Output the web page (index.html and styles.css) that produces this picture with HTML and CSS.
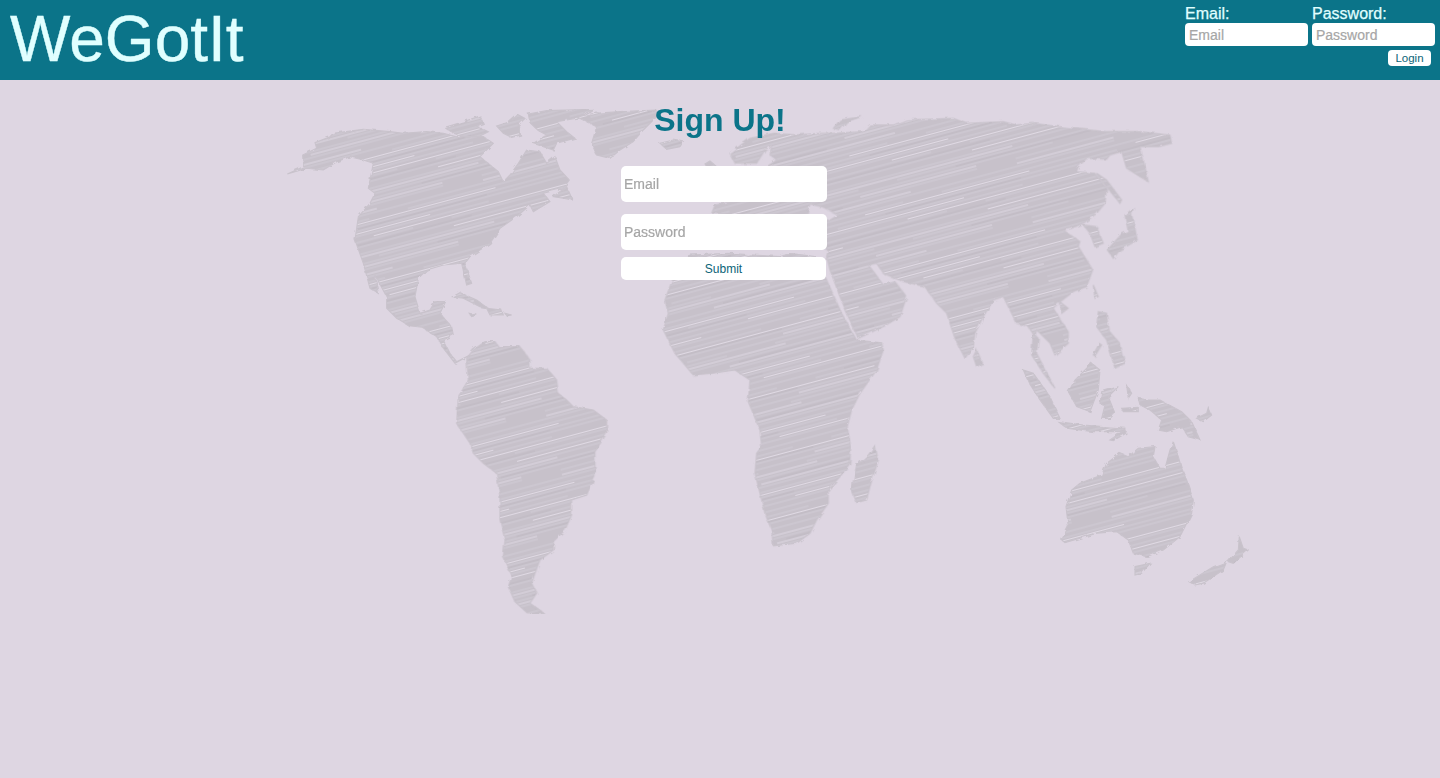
FILE: index.html
```html
<!DOCTYPE html>
<html lang="en">
<head>
    <meta charset="UTF-8">
    <title>WeGotIt</title>
    <link rel="stylesheet" href="styles.css">
</head>
<body>
<!-- scribbled world map, drawn behind the page -->
<svg class="map" width="1440" height="778" viewBox="0 0 1440 778" aria-hidden="true">
    <defs>
        <!-- americas north + arctic + greenland + caribbean -->
        <path id="land-nw" transform="translate(280 100) scale(.3333)" d="M22,222 L70,200 L68,165 L110,145 L105,128 L150,110 L160,100 L250,88 L330,95 L370,100 L440,95 L490,100 L530,110 L610,110 L640,130 L600,170 L655,215 L670,245 L690,225 L715,190 L740,150 L780,155 L800,190 L825,170 L840,210 L868,240 L850,265 L790,280 L810,305 L760,335 L750,315 L710,350 L660,385 L630,430 L570,470 L555,490 L575,550 L560,555 L545,490 L490,495 L440,510 L415,535 L405,590 L420,640 L450,630 L465,605 L497,605 L480,640 L515,680 L520,705 L490,720 L510,760 L530,785 L570,765 L525,790 L490,745 L470,710 L430,685 L390,680 L350,655 L320,625 L320,590 L285,525 L295,580 L270,565 L250,490 L225,420 L235,350 L270,310 L285,280 L265,265 L280,190 L250,180 L210,170 L170,185 L130,210 L80,205 Z
        M495,82 L550,65 L600,48 L610,70 L590,78 L625,95 L600,108 L560,112 L520,100 Z
        M650,78 L680,68 L710,42 L735,55 L715,75 L722,105 L695,112 L670,100 Z
        M745,42 L800,32 L940,28 L890,55 L830,65 L860,95 L885,115 L830,130 L820,150 L760,130 L800,105 L775,92 L750,68 Z
        M820,290 L860,260 L878,300 L850,295 Z
        M518,590 L540,578 L590,600 L625,625 L600,620 L550,595 Z
        M620,625 L665,630 L670,645 L630,645 Z
        M568,640 L592,645 L575,650 Z
        M675,640 L695,645 L680,648 Z
        M890,50 L945,40 L1020,35 L1130,30 L1135,45 L1090,90 L1060,125 L1020,150 L990,175 L950,165 L935,130 L950,80 Z
        M1140,130 L1180,120 L1210,125 L1200,140 L1160,148 Z
        M1275,192 L1290,183 L1305,195 L1290,215 Z"/>
        <!-- europe + asia + islands -->
        <path id="land-asia" transform="translate(820 100) scale(.3333)" d="M-70,105 L-140,100 L-210,115 L-270,160 L-255,190 L-190,190 L-165,150 L-145,135 L-150,165 L-130,180 L-160,200 L-200,260 L-240,300 L-315,315 L-325,340 L-240,345 L-100,400 L25,450 L20,470 L30,510 L60,590 L85,650 L115,715 L190,680 L240,650 L260,590 L225,545 L190,555 L165,520 L145,495 L170,490 L190,520 L225,535 L250,545 L315,560 L350,610 L380,640 L405,715 L435,775 L460,740 L465,700 L490,650 L520,600 L550,590 L590,670 L625,680 L645,710 L650,690 L690,730 L705,765 L745,730 L745,695 L700,625 L715,610 L760,575 L800,560 L818,510 L800,480 L775,440 L780,425 L730,390 L755,385 L790,370 L830,340 L855,310 L860,265 L825,220 L770,215 L775,200 L800,175 L860,178 L870,165 L905,155 L920,205 L960,230 L985,245 L975,200 L960,140 L1015,140 L1055,130 L1050,105 L960,95 L860,95 L760,85 L640,70 L590,75 L550,65 L440,70 L400,55 L260,60 L220,75 L150,75 L130,95 L40,100 L0,100 Z
        M-40,345 L-30,312 L10,322 L55,345 L30,360 Z
        M40,85 L60,60 L125,50 L80,65 L60,90 Z
        M470,750 L488,790 L470,800 L460,770 Z
        M862,450 L905,402 L945,385 L952,420 L900,450 L880,475 Z
        M915,345 L940,325 L935,345 L945,385 L925,395 Z
        M830,220 L860,240 L905,300 L900,310 L855,255 Z
        M790,375 L830,380 L850,430 L825,440 L810,400 Z
        M720,605 L745,625 L725,640 Z
        M820,555 L835,590 L825,595 Z
        M835,635 L860,640 L865,690 L900,730 L915,790 L885,805 L860,720 L830,680 Z
        M838,730 L845,735 L825,768 L820,765 Z
        M640,700 L655,715 L650,760 L705,865 L670,820 L635,765 Z"/>
        <!-- south america + africa + madagascar -->
        <path id="land-south" transform="translate(440 330) scale(.3333)" d="M80,85 L100,60 L135,35 L165,35 L175,50 L240,50 L270,90 L270,115 L320,115 L350,150 L355,190 L375,205 L400,230 L460,240 L500,270 L500,310 L465,365 L465,440 L440,495 L395,510 L395,555 L375,600 L340,635 L340,660 L300,690 L285,730 L275,760 L290,790 L270,820 L315,852 L265,852 L225,815 L205,770 L215,740 L190,680 L195,630 L180,570 L180,500 L170,430 L130,400 L100,370 L90,340 L50,280 L55,200 L85,150 Z
        M750,-225 L870,-230 L940,-225 L1020,-220 L1050,-230 L1130,-220 L1160,-150 L1205,-50 L1250,30 L1325,38 L1330,60 L1310,120 L1260,190 L1235,240 L1222,290 L1232,350 L1230,400 L1200,440 L1165,480 L1165,520 L1130,570 L1110,610 L1070,640 L1000,648 L995,600 L975,550 L945,430 L950,370 L965,350 L960,300 L925,215 L930,150 L885,120 L820,130 L760,135 L705,70 L670,0 L685,-50 L675,-90 L695,-145 Z
        M1305,347 L1315,390 L1290,470 L1280,510 L1250,518 L1235,480 L1250,405 L1285,375 Z"/>
        <!-- indonesia + australia + nz -->
        <path id="land-oceania" transform="translate(1000 350) scale(.3333)" d="M70,60 L100,70 L150,140 L180,205 L160,205 L120,150 L85,95 Z
        M275,40 L300,60 L295,120 L270,185 L230,170 L205,125 L225,90 Z
        M175,215 L250,225 L375,235 L370,245 L280,245 L200,235 Z
        M330,270 L375,240 L378,250 L340,272 Z
        M305,125 L355,110 L325,140 L345,190 L330,205 L305,205 L315,165 L300,160 Z
        M415,145 L445,150 L480,150 L545,185 L575,215 L600,270 L565,260 L545,230 L500,245 L475,240 L485,210 L450,180 L420,165 Z
        M590,205 L620,190 L625,172 L635,195 L610,215 Z
        M380,105 L395,130 L385,145 Z
        M365,175 L415,172 L415,185 L370,185 Z
        M185,570 L205,530 L198,470 L215,420 L240,400 L305,375 L320,340 L360,310 L385,320 L415,295 L465,290 L460,320 L480,355 L495,355 L510,300 L520,275 L535,320 L545,355 L560,390 L580,450 L575,490 L540,560 L490,600 L440,620 L400,610 L385,570 L350,545 L290,550 L240,565 L195,578 Z
        M405,650 L450,640 L425,670 L405,675 Z
        M567,695 L640,650 L680,635 L670,660 L610,700 L585,705 Z
        M685,635 L715,600 L718,560 L730,595 L745,600 L700,640 Z"/>
        <filter id="rough" x="0" y="0" width="100%" height="100%">
            <feTurbulence type="fractalNoise" baseFrequency=".16" numOctaves="2" seed="4"/>
            <feDisplacementMap in="SourceGraphic" scale="4"/>
            <feGaussianBlur stdDeviation=".3"/>
        </filter>
        <filter id="soft" x="0" y="0" width="100%" height="100%">
            <feGaussianBlur stdDeviation=".35"/>
        </filter>
        <mask id="land-mask" maskUnits="userSpaceOnUse" x="0" y="0" width="1440" height="778">
            <g class="land-shape" filter="url(#rough)">
                <use href="#land-nw"/>
                <use href="#land-asia"/>
                <use href="#land-south"/>
                <use href="#land-oceania"/>
            </g>
        </mask>
        <pattern id="scribble" patternUnits="userSpaceOnUse" width="520" height="61" patternTransform="rotate(-15)">
            <rect width="520" height="61" fill="#c7c1ca"/>
            <path class="scr-mid" d="M0,2 H300 M340,2 H520 M60,7 H520 M0,11 H180 M230,11 H520 M0,16 H420 M20,22 H340 M380,22 H520 M0,27 H130 M170,27 H520 M0,34 H520 M50,40 H260 M300,40 H520 M0,44 H90 M140,44 H460 M0,50 H380 M420,50 H520 M30,58 H520"/>
            <path class="scr-light" d="M20,4.5 H170 M260,4.5 H430 M120,13.5 H360 M0,19.5 H70 M300,19.5 H520 M40,30.5 H230 M380,30.5 H500 M150,37 H420 M0,47 H150 M260,47 H380 M90,55 H310 M420,55 H520"/>
            <path class="scr-dark" d="M0,9 H120 M280,9 H420 M200,25 H400 M30,32 H150 M360,42 H500 M100,53 H240"/>
        </pattern>
    </defs>
    <g filter="url(#soft)">
        <rect width="1440" height="778" fill="url(#scribble)" mask="url(#land-mask)"/>
    </g>
    <g class="coast" filter="url(#rough)">
        <use href="#land-nw"/>
        <use href="#land-asia"/>
        <use href="#land-south"/>
        <use href="#land-oceania"/>
    </g>
</svg>

<header class="top">
    <div class="logo">WeGotIt</div>
    <form class="login">
        <label class="login-field">Email:
            <input type="text" placeholder="Email">
        </label>
        <label class="login-field">Password:
            <input type="password" placeholder="Password">
        </label>
        <button class="login-btn" type="button">Login</button>
    </form>
</header>

<main class="signup">
    <h1>Sign Up!</h1>
    <form class="signup-form">
        <input type="text" placeholder="Email">
        <input type="password" placeholder="Password">
        <button type="button">Submit</button>
    </form>
</main>
</body>
</html>
```

FILE: styles.css
```css
html, body {
    margin: 0;
    height: 100%;
}
body {
    background: #ded6e2;
    font-family: "Liberation Sans", Arial, sans-serif;
    overflow: hidden;
}
.map {
    position: absolute;
    left: 0;
    top: 0;
}
.map path {
    vector-effect: non-scaling-stroke;
}
.land-shape {
    fill: #fff;
}
.scr-mid {
    fill: none;
    stroke: #d3cdd7;
    stroke-width: .9;
}
.scr-light {
    fill: none;
    stroke: #e0dae4;
    stroke-width: 1.1;
}
.scr-dark {
    fill: none;
    stroke: #c0bac3;
    stroke-width: 1;
}
.coast {
    fill: none;
    stroke: #c9c3cc;
    stroke-width: 1.1;
}

/* top bar */
.top {
    position: relative;
    display: flex;
    justify-content: space-between;
    height: 80px;
    background: #0b7489;
}
.logo {
    padding-left: 10px;
    font-size: 64px;
    line-height: 78px;
    color: #e0ffff;
    -webkit-text-stroke: .4px #e0ffff;
}
.login {
    display: grid;
    grid-template-columns: 123px 123px;
    column-gap: 4px;
    align-content: start;
    padding: 5px 5px 0 0;
}
.login-field {
    display: block;
    font-size: 16px;
    line-height: 18px;
    color: #e0ffff;
    -webkit-text-stroke: .25px #e0ffff;
}
.login-field input {
    display: block;
    box-sizing: border-box;
    width: 123px;
    height: 23px;
    margin: 0;
    padding: 0 4px;
    border: 0;
    border-radius: 4px;
    background: #fff;
    font: 14px "Liberation Sans", Arial, sans-serif;
    -webkit-text-stroke: 0;
}
.login-btn {
    grid-column: 1 / 3;
    justify-self: end;
    width: 43px;
    height: 16px;
    margin: 4px 4px 0 0;
    padding: 0;
    border: 0;
    border-radius: 4px;
    background: #fff;
    color: #0b6477;
    font: 11.5px "Liberation Sans", Arial, sans-serif;
}
input::placeholder {
    color: #a6a6a6;
    opacity: 1;
    -webkit-text-stroke: .2px #a6a6a6;
}

/* sign up */
.signup {
    position: relative;
    display: flex;
    flex-direction: column;
    align-items: center;
}
.signup h1 {
    margin: 21px 0 26px;
    font-size: 32px;
    line-height: 39px;
    color: #0b7489;
}
.signup-form {
    display: flex;
    flex-direction: column;
    width: 206px;
    margin-left: 8px;
}
.signup-form input {
    box-sizing: border-box;
    height: 36px;
    margin: 0 0 12px;
    padding: 0 3px;
    border: 0;
    border-radius: 5px;
    background: #fff;
    font: 14px "Liberation Sans", Arial, sans-serif;
}
.signup-form input:nth-child(2) {
    margin-bottom: 7px;
}
.signup-form button {
    width: 205px;
    height: 23px;
    padding: 0;
    border: 0;
    border-radius: 5px;
    background: #fff;
    color: #0b6477;
    font: 12px "Liberation Sans", Arial, sans-serif;
}
```
